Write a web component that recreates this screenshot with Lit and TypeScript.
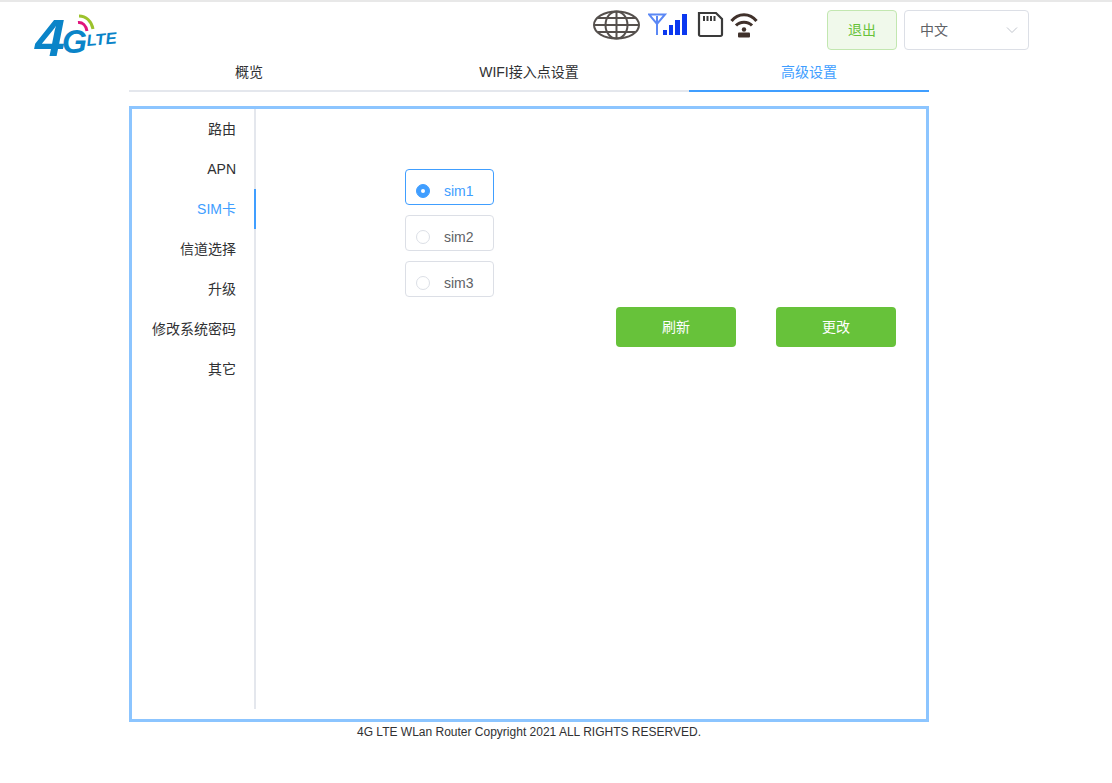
import { LitElement, html, css } from "lit";
import { customElement, state } from "lit/decorators.js";

@customElement("app-root")
export class AppRoot extends LitElement {
  static styles = css`
    :host { display: block; width: 1112px; height: 783px; background: #fff; font-family: "Liberation Sans", "Noto Sans CJK SC", sans-serif; font-size: 14px; color: #303133; overflow: hidden; border-top: 2px solid #e8e8e8; box-sizing: border-box; }
  `;
  render() {
    return html`<top-bar></top-bar><main-area></main-area>`;
  }
}

@customElement("top-bar")
export class TopBar extends LitElement {
  static styles = css`
    :host { display: flex; height: 48px; align-items: flex-start; }
    .logo { margin: 11px 0 0 33px; width: 86px; height: 46px; display: block; flex: none; overflow: visible; }
    .logo text { font-family: "Liberation Sans", sans-serif; font-weight: 700; font-style: italic; fill: #0a84c8; }
    .icons { display: flex; align-items: flex-start; margin: 8px 0 0 474px; height: 30px; flex: none; }
    .icons svg { display: block; flex: none; }
    .signal { margin: 3px 0 0 8px; }
    .card { margin: 1px 0 0 9px; }
    .wifi { margin: 3px 0 0 6px; }
    .out { margin: 8px 0 0 69px; width: 70px; height: 40px; box-sizing: border-box; border: 1px solid #c2e7b0; border-radius: 4px; background: #f0f9eb; color: #67c23a; display: flex; align-items: center; justify-content: center; font-size: 14px; padding-bottom: 2px; }
    .sel { margin: 8px 0 0 7px; width: 125px; height: 40px; box-sizing: border-box; border: 1px solid #dcdfe6; border-radius: 4px; display: flex; align-items: center; justify-content: space-between; padding: 0 10px 0 15px; color: #606266; font-size: 14px; }
    .sel span { padding-bottom: 2px; }
  `;
  render() {
    return html`
      <svg class="logo" viewBox="0 0 86 46" aria-label="4G LTE logo">
        <text x="2" y="43" font-size="52" textLength="30" lengthAdjust="spacingAndGlyphs">4</text>
        <text x="29" y="40" font-size="33" textLength="25" lengthAdjust="spacingAndGlyphs">G</text>
        <text x="54" y="33" font-size="16" textLength="30" lengthAdjust="spacingAndGlyphs" transform="rotate(-5 54 33)">LTE</text>
        <path d="M45 9.500c4.500 -0.500 8 3 9 8.500" fill="none" stroke="#e0147c" stroke-width="3"/>
        <path d="M46 3c7 0 12.500 5 14 13" fill="none" stroke="#9cc22c" stroke-width="3"/>
      </svg>
      <div class="icons">
        <svg width="47" height="30" viewBox="0 0 47 30" fill="none" stroke="#55504d" stroke-width="2">
          <ellipse cx="23.500" cy="15" rx="22.500" ry="13.500"/>
          <ellipse cx="23.500" cy="15" rx="11" ry="13.500"/>
          <path d="M23.500 1.500v27M1 15h45M5 8h37M5 22h37"/>
        </svg>
        <svg class="signal" width="40" height="23" viewBox="0 0 40 23" fill="none">
          <path d="M1 1.500h16l-8 9.500zM9 3v19" stroke="#5b88f5" stroke-width="2"/>
          <path d="M15 17h4v5h-4zM21 12h4v10h-4zM27 7h5v15h-5zM34 1h5v21h-5z" fill="#0b38f0"/>
        </svg>
        <svg class="card" width="27" height="27" viewBox="0 0 27 27" fill="none">
          <path d="M2 2h17l6 6v15.500a1.500 1.500 0 0 1-1.500 1.500H3.500A1.500 1.500 0 0 1 2 23.500z" stroke="#3a3a3a" stroke-width="2.200"/>
          <path d="M7 5v5M10.500 5v5M14 5v5M17.500 5v5" stroke="#3a3a3a" stroke-width="2"/>
        </svg>
        <svg class="wifi" width="28" height="26" viewBox="0 0 28 26" fill="none" stroke="#40312b" stroke-width="3">
          <path d="M1.500 8C8 -.5 20 -.5 26.500 8M6 12.500C10 8 18 8 22 12.500"/>
          <circle cx="14" cy="16.500" r="2.200" fill="#40312b" stroke="none"/>
          <rect x="8" y="19.500" width="12" height="5" rx="1" fill="#40312b" stroke="none"/>
        </svg>
      </div>
      <div class="out">退出</div>
      <div class="sel"><span>中文</span>
        <svg width="14" height="14" viewBox="0 0 14 14" fill="none" stroke="#c0c4cc" stroke-width="1"><path d="M3 4.500l5 5 5-5"/></svg>
      </div>`;
  }
}

@customElement("main-area")
export class MainArea extends LitElement {
  @state() sim = "sim1";
  static styles = css`
    :host { display: block; width: 800px; margin-left: 129px; }
    .tabs { display: grid; grid-template-columns: 240px 240px 240px; column-gap: 40px; height: 42px; box-shadow: inset 0 -2px 0 #e4e7ed; }
    .tab { display: flex; align-items: center; justify-content: center; font-size: 14px; color: #303133; height: 42px; box-sizing: border-box; }
    .tab.on { color: #409eff; box-shadow: inset 0 -2px 0 #409eff; }
    .box { margin-top: 14px; height: 616px; box-sizing: border-box; border: 3px solid #8cc5ff; display: flex; align-items: flex-start; }
    .side { width: 124px; height: 600px; box-sizing: border-box; border-right: 2px solid #e4e7ed; flex: none; }
    .item { height: 40px; line-height: 40px; text-align: right; padding-right: 18px; font-size: 14px; color: #303133; margin-right: -2px; border-right: 2px solid transparent; }
    .item.on { color: #409eff; border-right-color: #409eff; }
    .content { flex: 1; }
    .radios { display: flex; flex-direction: column; gap: 10px; margin: 60px 0 0 149px; align-items: flex-start; }
    .radio { width: 89px; height: 36px; box-sizing: border-box; border: 1px solid #dcdfe6; border-radius: 4px; display: flex; align-items: center; padding: 8px 0 0 10px; color: #606266; font-size: 14px; cursor: pointer; }
    .radio .dot { width: 14px; height: 14px; box-sizing: border-box; border: 1px solid #dcdfe6; border-radius: 50%; margin-right: 14px; flex: none; display: flex; align-items: center; justify-content: center; }
    .radio.on { border-color: #409eff; color: #409eff; }
    .radio.on .dot { background: #409eff; border-color: #409eff; }
    .radio.on .dot::after { content: ""; width: 4px; height: 4px; border-radius: 50%; background: #fff; }
    .btns { display: flex; gap: 40px; margin: 10px 0 0 360px; }
    .btn { width: 120px; height: 40px; box-sizing: border-box; padding-bottom: 2px; border-radius: 4px; background: #67c23a; color: #fff; font-size: 14px; display: flex; align-items: center; justify-content: center; }
    .foot { font-size: 12px; line-height: 20px; text-align: center; color: #303133; }
  `;
  render() {
    const items = ["路由", "APN", "SIM卡", "信道选择", "升级", "修改系统密码", "其它"];
    return html`
      <div class="tabs">
        <div class="tab">概览</div>
        <div class="tab">WIFI接入点设置</div>
        <div class="tab on">高级设置</div>
      </div>
      <div class="box">
        <div class="side">
          ${items.map((t, i) => html`<div class="item ${i === 2 ? "on" : ""}">${t}</div>`)}
        </div>
        <div class="content">
          <div class="radios">
            ${["sim1", "sim2", "sim3"].map(s => html`
              <div class="radio ${this.sim === s ? "on" : ""}" @click=${() => (this.sim = s)}>
                <span class="dot"></span>${s}
              </div>`)}
          </div>
          <div class="btns"><div class="btn">刷新</div><div class="btn">更改</div></div>
        </div>
      </div>
      <div class="foot">4G LTE WLan Router Copyright 2021 ALL RIGHTS RESERVED.</div>`;
  }
}
